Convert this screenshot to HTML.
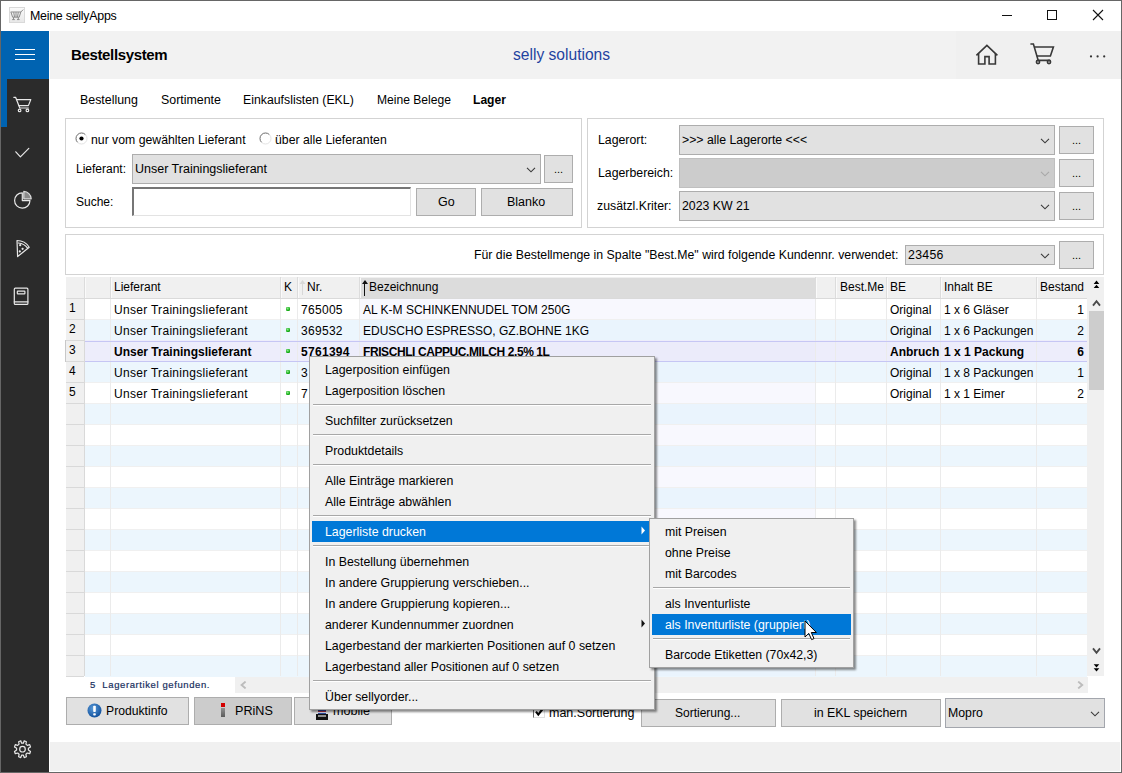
<!DOCTYPE html>
<html><head><meta charset="utf-8">
<style>
*{box-sizing:border-box;margin:0;padding:0}
html,body{width:1122px;height:773px;overflow:hidden;background:#fff}
body{position:relative;font-family:"Liberation Sans",sans-serif;font-size:12px;color:#000}
.a{position:absolute}
.t{position:absolute;white-space:pre;line-height:14px}
.gb{position:absolute;border:1px solid #d3d3d3;background:#fff}
.cb{position:absolute;background:#e1e1e1;border:1px solid #adadad}
.btn{position:absolute;background:#e1e1e1;border:1px solid #adadad;text-align:center}
.chev{position:absolute;width:7px;height:7px;border-right:1.3px solid #333;border-bottom:1.3px solid #333;transform:rotate(45deg)}
.sep{position:absolute;height:1px;background:#cfcfcf;border-bottom:1px solid #fff}
</style></head><body>

<!-- window border -->
<div class="a" style="left:0;top:0;width:1122px;height:773px;border:1px solid #666"></div>

<!-- title bar -->
<div class="a" style="left:9px;top:7px;width:16px;height:16px;border:1px solid #d9d9d9;background:linear-gradient(#fafafa,#e8e8e8)"></div>
<div class="t" style="left:30px;top:8.5px;font-size:12.4px;letter-spacing:-0.25px">Meine sellyApps</div>
<div class="a" style="left:1002px;top:15px;width:10px;height:1px;background:#111"></div>
<div class="a" style="left:1047px;top:10px;width:10px;height:10px;border:1px solid #111"></div>
<svg class="a" style="left:1092px;top:9px" width="12" height="12" viewBox="0 0 12 12"><path d="M1 1L11 11M11 1L1 11" stroke="#111" stroke-width="1.1"/></svg>

<!-- sidebar -->
<div class="a" style="left:1px;top:31px;width:48px;height:741px;background:#2b2b2b"></div>
<div class="a" style="left:1px;top:31px;width:48px;height:48px;background:#0063b1"></div>
<div class="a" style="left:1px;top:79px;width:6px;height:48px;background:#0063b1"></div>
<div class="a" style="left:15px;top:49px;width:20px;height:1px;background:#fff"></div>
<div class="a" style="left:15px;top:54px;width:20px;height:1px;background:#fff"></div>
<div class="a" style="left:15px;top:59px;width:20px;height:1px;background:#fff"></div>

<!-- header -->
<div class="a" style="left:50px;top:31px;width:1071px;height:48px;background:#f2f2f2"></div>
<div class="a" style="left:956px;top:31px;width:165px;height:48px;background:#f0f0f0"></div>
<div class="t" style="left:71px;top:47.5px;font-size:15px;letter-spacing:-0.35px;font-weight:bold">Bestellsystem</div>
<div class="t" style="left:513px;top:48px;font-size:15.6px;color:#1f42a0">selly solutions</div>

<!-- tabs -->
<div class="t" style="left:80px;top:93px;font-size:12.4px">Bestellung</div>
<div class="t" style="left:161px;top:93px;font-size:12.4px">Sortimente</div>
<div class="t" style="left:243px;top:93px;font-size:12.3px">Einkaufslisten (EKL)</div>
<div class="t" style="left:377px;top:93px;font-size:12.1px">Meine Belege</div>
<div class="t" style="left:473px;top:93px;font-size:12.1px;font-weight:bold">Lager</div>

<!-- left group box -->
<div class="gb" style="left:65px;top:118px;width:517px;height:110px"></div>
<div class="gb" style="left:587px;top:118px;width:517px;height:110px"></div>

<!-- kundennr box -->
<div class="gb" style="left:65px;top:234px;width:1039px;height:41px"></div>


<!-- left group contents -->
<svg class="a" style="left:75px;top:132px" width="13" height="13" viewBox="0 0 13 13"><path d="M10.4 2.6A5.5 5.5 0 0 0 2.6 10.4" stroke="#6a6a6a" stroke-width="1" fill="none"/><path d="M10.4 2.6A5.5 5.5 0 0 1 2.6 10.4" stroke="#e3e3e3" stroke-width="1" fill="none"/><circle cx="6.5" cy="6.5" r="2.1" fill="#000"/></svg>
<div class="t" style="left:91px;top:133px;font-size:12.25px">nur vom gewählten Lieferant</div>
<svg class="a" style="left:259px;top:132px" width="13" height="13" viewBox="0 0 13 13"><path d="M10.4 2.6A5.5 5.5 0 0 0 2.6 10.4" stroke="#6a6a6a" stroke-width="1" fill="none"/><path d="M10.4 2.6A5.5 5.5 0 0 1 2.6 10.4" stroke="#e3e3e3" stroke-width="1" fill="none"/></svg>
<div class="t" style="left:275px;top:133px;font-size:12.25px">über alle Lieferanten</div>

<div class="t" style="left:76px;top:162px;font-size:12px">Lieferant:</div>
<div class="cb" style="left:132px;top:154px;width:409px;height:30px"></div>
<div class="t" style="left:135px;top:162px;font-size:12.5px">Unser Trainingslieferant</div>
<svg class="a" style="left:526px;top:167px" width="10" height="6"><path d="M1 0.8L5 4.8L9 0.8" stroke="#3a3a3a" stroke-width="1.1" fill="none"/></svg>
<div class="btn" style="left:544px;top:155px;width:29px;height:28px"></div>
<div class="t" style="left:554px;top:162px;font-size:11px">...</div>

<div class="t" style="left:76px;top:195px;font-size:12px">Suche:</div>
<div class="a" style="left:132px;top:187px;width:279px;height:29px;background:#fff;border:1px solid #e3e3e3;border-top:2px solid #767676;border-left:2px solid #767676"></div>
<div class="btn" style="left:416px;top:188px;width:60px;height:28px"></div>
<div class="t" style="left:438px;top:195px;font-size:12.5px">Go</div>
<div class="btn" style="left:481px;top:188px;width:92px;height:28px"></div>
<div class="t" style="left:507px;top:195px;font-size:12.5px">Blanko</div>

<!-- right group contents -->
<div class="t" style="left:598px;top:133px;font-size:12.3px">Lagerort:</div>
<div class="cb" style="left:679px;top:125px;width:376px;height:30px"></div>
<div class="t" style="left:682px;top:133px;font-size:12.3px">&gt;&gt;&gt; alle Lagerorte &lt;&lt;&lt;</div>
<svg class="a" style="left:1040px;top:138px" width="10" height="6"><path d="M1 0.8L5 4.8L9 0.8" stroke="#3a3a3a" stroke-width="1.1" fill="none"/></svg>
<div class="btn" style="left:1059px;top:126px;width:35px;height:28px"></div>
<div class="t" style="left:1072px;top:133px;font-size:11px">...</div>

<div class="t" style="left:598px;top:166px;font-size:12.3px">Lagerbereich:</div>
<div class="cb" style="left:679px;top:158px;width:376px;height:30px;background:#cccccc;border-color:#bfbfbf"></div>
<svg class="a" style="left:1040px;top:171px" width="10" height="6"><path d="M1 0.8L5 4.8L9 0.8" stroke="#a8a8a8" stroke-width="1.1" fill="none"/></svg>
<div class="btn" style="left:1059px;top:159px;width:35px;height:28px"></div>
<div class="t" style="left:1072px;top:166px;font-size:11px">...</div>

<div class="t" style="left:597px;top:199px;font-size:12.3px">zusätzl.Kriter:</div>
<div class="cb" style="left:679px;top:191px;width:376px;height:30px"></div>
<div class="t" style="left:682px;top:199px;font-size:12.3px">2023 KW 21</div>
<svg class="a" style="left:1040px;top:204px" width="10" height="6"><path d="M1 0.8L5 4.8L9 0.8" stroke="#3a3a3a" stroke-width="1.1" fill="none"/></svg>
<div class="btn" style="left:1059px;top:192px;width:35px;height:28px"></div>
<div class="t" style="left:1072px;top:199px;font-size:11px">...</div>

<!-- kundennr row -->
<div class="t" style="left:474px;top:248px;font-size:12.3px">Für die Bestellmenge in Spalte "Best.Me" wird folgende Kundennr. verwendet:</div>
<div class="cb" style="left:905px;top:245px;width:150px;height:20px"></div>
<div class="t" style="left:908px;top:248px;font-size:12.3px;letter-spacing:0.3px">23456</div>
<svg class="a" style="left:1040px;top:253px" width="10" height="6"><path d="M1 0.8L5 4.8L9 0.8" stroke="#3a3a3a" stroke-width="1.1" fill="none"/></svg>
<div class="btn" style="left:1059px;top:241px;width:35px;height:28px"></div>
<div class="t" style="left:1072px;top:248px;font-size:11px">...</div>


<!-- sidebar icons -->
<svg class="a" style="left:0;top:0;overflow:visible" width="50" height="773">
<g fill="none" stroke="#e8e8e8" stroke-width="1.2" stroke-linecap="round" stroke-linejoin="round">
<path d="M13.8 97.3H15.6L19.8 108H28.4"/>
<path d="M16.6 99.6H30.8L28.4 105.6H18.8"/>
<circle cx="19.6" cy="110.4" r="1.3"/><circle cx="27.4" cy="110.4" r="1.3"/>
<path d="M15.8 151.8L20.4 156.8L28.8 148.4"/>
<path d="M22.3 192.8A7.7 7.7 0 1 0 30 200.6H22.3Z"/>
<path d="M23.8 191.4A7.8 7.8 0 0 1 31.2 198.8H23.8Z" fill="#8a8a8a" stroke="#dcdcdc"/>
<path d="M17 240.5Q25 240.5 29.2 247.2L17.6 256.6Z"/>
<path d="M18.3 243Q24.5 243.5 27.6 248.2"/>
<circle cx="20.2" cy="245.2" r="0.5" fill="#e8e8e8"/><circle cx="22.6" cy="248.8" r="0.5" fill="#e8e8e8"/><circle cx="19.8" cy="251.4" r="0.5" fill="#e8e8e8"/>
<rect x="14.3" y="288.2" width="13.6" height="16.2" rx="1"/>
<path d="M14.3 301.8H27.9"/>
<rect x="17.3" y="291.2" width="7.6" height="2.6" rx="0.6"/>
<path d="M20.8 740.8L21.6 743.2L23.4 743.2L24.2 740.8L26.4 741.7L25.9 744.1L27.3 745.4L29.7 744.7L30.5 746.9L28.4 748.3V750.1L30.5 751.5L29.7 753.7L27.3 753L25.9 754.3L26.4 756.7L24.2 757.6L23.4 755.2H21.6L20.8 757.6L18.6 756.7L19.1 754.3L17.7 753L15.3 753.7L14.5 751.5L16.6 750.1V748.3L14.5 746.9L15.3 744.7L17.7 745.4L19.1 744.1L18.6 741.7Z"/>
<circle cx="22.5" cy="749.2" r="2.8"/>
</g>
</svg>

<!-- header icons -->
<svg class="a" style="left:960px;top:31px;overflow:visible" width="160" height="48">
<g fill="none" stroke="#383838" stroke-width="1.6" stroke-linejoin="miter">
<path d="M16.4 24.4L26.9 14.4L37.4 24.4"/>
<path d="M18.6 22.4V33H24.9V25.6H29.1V33H35.4V22.4"/>
<path d="M70.4 13H73.4L78.2 29.4H90.2"/>
<path d="M74.4 16H93.4L90.4 25H76.8"/>
<circle cx="78" cy="31" r="1.6"/><circle cx="89" cy="31" r="1.6"/>
</g>
<circle cx="131" cy="25.4" r="1.1" fill="#333"/><circle cx="137.6" cy="25.4" r="1.1" fill="#333"/><circle cx="144.2" cy="25.4" r="1.1" fill="#333"/>
</svg>

<!-- title icon cart -->
<svg class="a" style="left:9px;top:7px" width="16" height="16" viewBox="0 0 16 16">
<g fill="none" stroke="#8a8a8a" stroke-width="1">
<path d="M1.6 5H11.8L14.2 2.6"/>
<path d="M2 5.2L3.6 10.2H10.2L11.8 5"/>
<path d="M4.7 5.2L5.5 10M7 5.2V10M9.3 5.2L8.5 10"/>
<path d="M4.5 10.2V12.4M9.3 10.2V12.4M3.2 12.6H5.8M8 12.6H10.6"/>
</g></svg>

<!-- GRID START -->
<div class="a" style="left:66px;top:277px;width:1021px;height:21px;background:#f0f0f0"></div>
<div class="a" style="left:361px;top:278px;width:454px;height:20px;background:#dcdcdc"></div>
<div class="a" style="left:84px;top:277px;width:1px;height:21px;background:#dcdcdc"></div>
<div class="a" style="left:85px;top:278px;width:1px;height:20px;background:#fafafa"></div>
<div class="a" style="left:110px;top:277px;width:1px;height:21px;background:#dcdcdc"></div>
<div class="a" style="left:111px;top:278px;width:1px;height:20px;background:#fafafa"></div>
<div class="a" style="left:280px;top:277px;width:1px;height:21px;background:#dcdcdc"></div>
<div class="a" style="left:281px;top:278px;width:1px;height:20px;background:#fafafa"></div>
<div class="a" style="left:297px;top:277px;width:1px;height:21px;background:#dcdcdc"></div>
<div class="a" style="left:298px;top:278px;width:1px;height:20px;background:#fafafa"></div>
<div class="a" style="left:359px;top:277px;width:1px;height:21px;background:#dcdcdc"></div>
<div class="a" style="left:360px;top:278px;width:1px;height:20px;background:#fafafa"></div>
<div class="a" style="left:815px;top:277px;width:1px;height:21px;background:#dcdcdc"></div>
<div class="a" style="left:816px;top:278px;width:1px;height:20px;background:#fafafa"></div>
<div class="a" style="left:835px;top:277px;width:1px;height:21px;background:#dcdcdc"></div>
<div class="a" style="left:836px;top:278px;width:1px;height:20px;background:#fafafa"></div>
<div class="a" style="left:886px;top:277px;width:1px;height:21px;background:#dcdcdc"></div>
<div class="a" style="left:887px;top:278px;width:1px;height:20px;background:#fafafa"></div>
<div class="a" style="left:940px;top:277px;width:1px;height:21px;background:#dcdcdc"></div>
<div class="a" style="left:941px;top:278px;width:1px;height:20px;background:#fafafa"></div>
<div class="a" style="left:1036px;top:277px;width:1px;height:21px;background:#dcdcdc"></div>
<div class="a" style="left:1037px;top:278px;width:1px;height:20px;background:#fafafa"></div>
<div class="a" style="left:66px;top:298px;width:1021px;height:1px;background:#dadada"></div>
<div class="t" style="left:114px;top:280px">Lieferant</div>
<div class="t" style="left:284px;top:280px">K</div>
<div class="t" style="left:307px;top:280px">Nr.</div>
<div class="t" style="left:369px;top:280px">Bezeichnung</div>
<div class="t" style="left:840px;top:280px">Best.Me</div>
<div class="t" style="left:890px;top:280px">BE</div>
<div class="t" style="left:944px;top:280px">Inhalt BE</div>
<div class="t" style="left:1040px;top:280px">Bestand</div>
<div class="a" style="left:302px;top:281px;width:1px;height:14px;background:#d8d8d8"></div>
<svg class="a" style="left:299px;top:280px" width="7" height="5"><path d="M3.5 0L0.5 4H6.5Z" fill="#d8d8d8"/></svg>
<div class="a" style="left:364px;top:281px;width:1px;height:15px;background:#111"></div>
<svg class="a" style="left:361.5px;top:280px" width="6" height="5"><path d="M3 0L0 4H6Z" fill="#111"/></svg>
<div class="a" style="left:66px;top:299px;width:18px;height:20px;background:#f0f0f0"></div>
<div class="a" style="left:66px;top:319px;width:18px;height:1px;background:#d9d9d9"></div>
<div class="a" style="left:85px;top:299px;width:1002px;height:21px;background:#ffffff"></div>
<div class="a" style="left:360px;top:299px;width:455px;height:20px;background:#f8f8fe"></div>
<div class="t" style="left:69px;top:301px">1</div>
<div class="a" style="left:66px;top:320px;width:18px;height:20px;background:#f0f0f0"></div>
<div class="a" style="left:66px;top:340px;width:18px;height:1px;background:#d9d9d9"></div>
<div class="a" style="left:85px;top:320px;width:1002px;height:21px;background:#ecf6fd"></div>
<div class="a" style="left:360px;top:320px;width:455px;height:20px;background:#eaf4fd"></div>
<div class="t" style="left:69px;top:322px">2</div>
<div class="a" style="left:66px;top:341px;width:18px;height:20px;background:#f0f0f0"></div>
<div class="a" style="left:66px;top:361px;width:18px;height:1px;background:#d9d9d9"></div>
<div class="a" style="left:85px;top:340px;width:1002px;height:21px;background:#ededfb"></div>
<div class="a" style="left:360px;top:341px;width:455px;height:20px;background:#ebebfa"></div>
<div class="t" style="left:69px;top:343px">3</div>
<div class="a" style="left:66px;top:362px;width:18px;height:20px;background:#f0f0f0"></div>
<div class="a" style="left:66px;top:382px;width:18px;height:1px;background:#d9d9d9"></div>
<div class="a" style="left:85px;top:362px;width:1002px;height:21px;background:#ecf6fd"></div>
<div class="a" style="left:360px;top:362px;width:455px;height:20px;background:#eaf4fd"></div>
<div class="t" style="left:69px;top:364px">4</div>
<div class="a" style="left:66px;top:383px;width:18px;height:20px;background:#f0f0f0"></div>
<div class="a" style="left:66px;top:403px;width:18px;height:1px;background:#d9d9d9"></div>
<div class="a" style="left:85px;top:383px;width:1002px;height:21px;background:#ffffff"></div>
<div class="a" style="left:360px;top:383px;width:455px;height:20px;background:#f8f8fe"></div>
<div class="t" style="left:69px;top:385px">5</div>
<div class="a" style="left:66px;top:404px;width:18px;height:20px;background:#f0f0f0"></div>
<div class="a" style="left:66px;top:424px;width:18px;height:1px;background:#d9d9d9"></div>
<div class="a" style="left:85px;top:404px;width:1002px;height:21px;background:#ecf6fd"></div>
<div class="a" style="left:360px;top:404px;width:455px;height:20px;background:#eaf4fd"></div>
<div class="a" style="left:66px;top:425px;width:18px;height:20px;background:#f0f0f0"></div>
<div class="a" style="left:66px;top:445px;width:18px;height:1px;background:#d9d9d9"></div>
<div class="a" style="left:85px;top:425px;width:1002px;height:21px;background:#ffffff"></div>
<div class="a" style="left:360px;top:425px;width:455px;height:20px;background:#f8f8fe"></div>
<div class="a" style="left:66px;top:446px;width:18px;height:20px;background:#f0f0f0"></div>
<div class="a" style="left:66px;top:466px;width:18px;height:1px;background:#d9d9d9"></div>
<div class="a" style="left:85px;top:446px;width:1002px;height:21px;background:#ecf6fd"></div>
<div class="a" style="left:360px;top:446px;width:455px;height:20px;background:#eaf4fd"></div>
<div class="a" style="left:66px;top:467px;width:18px;height:20px;background:#f0f0f0"></div>
<div class="a" style="left:66px;top:487px;width:18px;height:1px;background:#d9d9d9"></div>
<div class="a" style="left:85px;top:467px;width:1002px;height:21px;background:#ffffff"></div>
<div class="a" style="left:360px;top:467px;width:455px;height:20px;background:#f8f8fe"></div>
<div class="a" style="left:66px;top:488px;width:18px;height:20px;background:#f0f0f0"></div>
<div class="a" style="left:66px;top:508px;width:18px;height:1px;background:#d9d9d9"></div>
<div class="a" style="left:85px;top:488px;width:1002px;height:21px;background:#ecf6fd"></div>
<div class="a" style="left:360px;top:488px;width:455px;height:20px;background:#eaf4fd"></div>
<div class="a" style="left:66px;top:509px;width:18px;height:20px;background:#f0f0f0"></div>
<div class="a" style="left:66px;top:529px;width:18px;height:1px;background:#d9d9d9"></div>
<div class="a" style="left:85px;top:509px;width:1002px;height:21px;background:#ffffff"></div>
<div class="a" style="left:360px;top:509px;width:455px;height:20px;background:#f8f8fe"></div>
<div class="a" style="left:66px;top:530px;width:18px;height:20px;background:#f0f0f0"></div>
<div class="a" style="left:66px;top:550px;width:18px;height:1px;background:#d9d9d9"></div>
<div class="a" style="left:85px;top:530px;width:1002px;height:21px;background:#ecf6fd"></div>
<div class="a" style="left:360px;top:530px;width:455px;height:20px;background:#eaf4fd"></div>
<div class="a" style="left:66px;top:551px;width:18px;height:20px;background:#f0f0f0"></div>
<div class="a" style="left:66px;top:571px;width:18px;height:1px;background:#d9d9d9"></div>
<div class="a" style="left:85px;top:551px;width:1002px;height:21px;background:#ffffff"></div>
<div class="a" style="left:360px;top:551px;width:455px;height:20px;background:#f8f8fe"></div>
<div class="a" style="left:66px;top:572px;width:18px;height:20px;background:#f0f0f0"></div>
<div class="a" style="left:66px;top:592px;width:18px;height:1px;background:#d9d9d9"></div>
<div class="a" style="left:85px;top:572px;width:1002px;height:21px;background:#ecf6fd"></div>
<div class="a" style="left:360px;top:572px;width:455px;height:20px;background:#eaf4fd"></div>
<div class="a" style="left:66px;top:593px;width:18px;height:20px;background:#f0f0f0"></div>
<div class="a" style="left:66px;top:613px;width:18px;height:1px;background:#d9d9d9"></div>
<div class="a" style="left:85px;top:593px;width:1002px;height:21px;background:#ffffff"></div>
<div class="a" style="left:360px;top:593px;width:455px;height:20px;background:#f8f8fe"></div>
<div class="a" style="left:66px;top:614px;width:18px;height:20px;background:#f0f0f0"></div>
<div class="a" style="left:66px;top:634px;width:18px;height:1px;background:#d9d9d9"></div>
<div class="a" style="left:85px;top:614px;width:1002px;height:21px;background:#ecf6fd"></div>
<div class="a" style="left:360px;top:614px;width:455px;height:20px;background:#eaf4fd"></div>
<div class="a" style="left:66px;top:635px;width:18px;height:20px;background:#f0f0f0"></div>
<div class="a" style="left:66px;top:655px;width:18px;height:1px;background:#d9d9d9"></div>
<div class="a" style="left:85px;top:635px;width:1002px;height:21px;background:#ffffff"></div>
<div class="a" style="left:360px;top:635px;width:455px;height:20px;background:#f8f8fe"></div>
<div class="a" style="left:66px;top:656px;width:18px;height:20px;background:#f0f0f0"></div>
<div class="a" style="left:66px;top:676px;width:18px;height:1px;background:#d9d9d9"></div>
<div class="a" style="left:85px;top:656px;width:1002px;height:21px;background:#ecf6fd"></div>
<div class="a" style="left:360px;top:656px;width:455px;height:20px;background:#eaf4fd"></div>
<div class="a" style="left:85px;top:319px;width:1002px;height:1px;background:#f0f0f0"></div>
<div class="a" style="left:85px;top:382px;width:1002px;height:1px;background:#f0f0f0"></div>
<div class="a" style="left:85px;top:403px;width:1002px;height:1px;background:#f0f0f0"></div>
<div class="a" style="left:85px;top:424px;width:1002px;height:1px;background:#f0f0f0"></div>
<div class="a" style="left:85px;top:445px;width:1002px;height:1px;background:#f0f0f0"></div>
<div class="a" style="left:85px;top:466px;width:1002px;height:1px;background:#f0f0f0"></div>
<div class="a" style="left:85px;top:487px;width:1002px;height:1px;background:#f0f0f0"></div>
<div class="a" style="left:85px;top:508px;width:1002px;height:1px;background:#f0f0f0"></div>
<div class="a" style="left:85px;top:529px;width:1002px;height:1px;background:#f0f0f0"></div>
<div class="a" style="left:85px;top:550px;width:1002px;height:1px;background:#f0f0f0"></div>
<div class="a" style="left:85px;top:571px;width:1002px;height:1px;background:#f0f0f0"></div>
<div class="a" style="left:85px;top:592px;width:1002px;height:1px;background:#f0f0f0"></div>
<div class="a" style="left:85px;top:613px;width:1002px;height:1px;background:#f0f0f0"></div>
<div class="a" style="left:85px;top:634px;width:1002px;height:1px;background:#f0f0f0"></div>
<div class="a" style="left:85px;top:655px;width:1002px;height:1px;background:#f0f0f0"></div>
<div class="a" style="left:84px;top:299px;width:1px;height:377px;background:#d9d9d9"></div>
<div class="a" style="left:110px;top:299px;width:1px;height:377px;background:#ebebeb"></div>
<div class="a" style="left:280px;top:299px;width:1px;height:377px;background:#ebebeb"></div>
<div class="a" style="left:297px;top:299px;width:1px;height:377px;background:#ebebeb"></div>
<div class="a" style="left:359px;top:299px;width:1px;height:377px;background:#ebebeb"></div>
<div class="a" style="left:815px;top:299px;width:1px;height:377px;background:#ebebeb"></div>
<div class="a" style="left:835px;top:299px;width:1px;height:377px;background:#ebebeb"></div>
<div class="a" style="left:886px;top:299px;width:1px;height:377px;background:#ebebeb"></div>
<div class="a" style="left:940px;top:299px;width:1px;height:377px;background:#ebebeb"></div>
<div class="a" style="left:1036px;top:299px;width:1px;height:377px;background:#ebebeb"></div>
<div class="a" style="left:85px;top:341px;width:1002px;height:1px;background:#c6c6f4"></div>
<div class="a" style="left:85px;top:361px;width:1002px;height:1px;background:#c6c6f4"></div>
<div class="a" style="left:65px;top:340px;width:1px;height:22px;background:#c8c8c8"></div>
<div class="t" style="left:114px;top:303px;letter-spacing:0.3px">Unser Trainingslieferant</div>
<div class="a" style="left:286px;top:307px;width:4px;height:4px;background:radial-gradient(circle at 40% 35%,#8fe88f,#18b018 60%,#0a800a);border-radius:1.2px"></div>
<div class="t" style="left:301px;top:303px;letter-spacing:0.3px">765005</div>
<div class="t" style="left:363px;top:303px">AL K-M SCHINKENNUDEL TOM 250G</div>
<div class="t" style="left:890px;top:303px">Original</div>
<div class="t" style="left:944px;top:303px">1 x 6 Gläser</div>
<div class="t" style="left:1000px;top:303px;width:84px;text-align:right">1</div>
<div class="t" style="left:114px;top:324px;letter-spacing:0.3px">Unser Trainingslieferant</div>
<div class="a" style="left:286px;top:328px;width:4px;height:4px;background:radial-gradient(circle at 40% 35%,#8fe88f,#18b018 60%,#0a800a);border-radius:1.2px"></div>
<div class="t" style="left:301px;top:324px;letter-spacing:0.3px">369532</div>
<div class="t" style="left:363px;top:324px">EDUSCHO ESPRESSO, GZ.BOHNE 1KG</div>
<div class="t" style="left:890px;top:324px">Original</div>
<div class="t" style="left:944px;top:324px">1 x 6 Packungen</div>
<div class="t" style="left:1000px;top:324px;width:84px;text-align:right">2</div>
<div class="t" style="left:114px;top:345px;font-weight:bold">Unser Trainingslieferant</div>
<div class="a" style="left:286px;top:349px;width:4px;height:4px;background:radial-gradient(circle at 40% 35%,#8fe88f,#18b018 60%,#0a800a);border-radius:1.2px"></div>
<div class="t" style="left:301px;top:345px;font-weight:bold;letter-spacing:0.3px">5761394</div>
<div class="t" style="left:363px;top:345px;font-weight:bold;letter-spacing:-0.42px">FRISCHLI CAPPUC.MILCH 2.5% 1L</div>
<div class="t" style="left:890px;top:345px;font-weight:bold">Anbruch</div>
<div class="t" style="left:944px;top:345px;font-weight:bold">1 x 1 Packung</div>
<div class="t" style="left:1000px;top:345px;width:84px;text-align:right;font-weight:bold">6</div>
<div class="t" style="left:114px;top:366px;letter-spacing:0.3px">Unser Trainingslieferant</div>
<div class="a" style="left:286px;top:370px;width:4px;height:4px;background:radial-gradient(circle at 40% 35%,#8fe88f,#18b018 60%,#0a800a);border-radius:1.2px"></div>
<div class="t" style="left:301px;top:366px;letter-spacing:0.3px">3</div>
<div class="t" style="left:890px;top:366px">Original</div>
<div class="t" style="left:944px;top:366px">1 x 8 Packungen</div>
<div class="t" style="left:1000px;top:366px;width:84px;text-align:right">1</div>
<div class="t" style="left:114px;top:387px;letter-spacing:0.3px">Unser Trainingslieferant</div>
<div class="a" style="left:286px;top:391px;width:4px;height:4px;background:radial-gradient(circle at 40% 35%,#8fe88f,#18b018 60%,#0a800a);border-radius:1.2px"></div>
<div class="t" style="left:301px;top:387px;letter-spacing:0.3px">7</div>
<div class="t" style="left:890px;top:387px">Original</div>
<div class="t" style="left:944px;top:387px">1 x 1 Eimer</div>
<div class="t" style="left:1000px;top:387px;width:84px;text-align:right">2</div>
<div class="a" style="left:1087px;top:277px;width:17px;height:399px;background:#f0f0f0"></div>
<div class="a" style="left:1089px;top:311px;width:15px;height:79px;background:#cdcdcd"></div>
<svg class="a" style="left:1093px;top:280px" width="7" height="10"><path d="M3.5 0.6L6.3 3.9H0.7Z M3.5 4.7L6.3 8H0.7Z" fill="#000"/></svg>
<svg class="a" style="left:1092px;top:299px" width="9" height="8"><path d="M1 6.6L4.5 2.2L8 6.6" stroke="#4a4a4a" stroke-width="1.9" fill="none"/></svg>
<svg class="a" style="left:1092px;top:647px" width="9" height="8"><path d="M1 1.4L4.5 5.8L8 1.4" stroke="#4a4a4a" stroke-width="1.9" fill="none"/></svg>
<svg class="a" style="left:1093px;top:663px" width="7" height="10"><path d="M3.5 4.6L6.3 1.2H0.7Z M3.5 8.6L6.3 5.2H0.7Z" fill="#000"/></svg>
<div class="a" style="left:235px;top:677px;width:853px;height:16px;background:#f0f0f0"></div>
<svg class="a" style="left:240px;top:681px" width="7" height="8"><path d="M5.6 0.6L1.6 4L5.6 7.4" stroke="#bcbcbc" stroke-width="1.9" fill="none"/></svg>
<svg class="a" style="left:1077px;top:681px" width="7" height="8"><path d="M1.2 0.6L5.2 4L1.2 7.4" stroke="#bcbcbc" stroke-width="1.9" fill="none"/></svg>
<div class="t" style="left:90px;top:678px;font-size:9.5px;letter-spacing:0.6px;color:#18305e;-webkit-text-stroke:0.2px #18305e">5  Lagerartikel gefunden.</div>
<!-- GRID END -->

<!-- bottom buttons -->
<div class="btn" style="left:66px;top:697px;width:123px;height:28px"></div>
<svg class="a" style="left:87px;top:703px" width="15" height="15" viewBox="0 0 15 15"><defs><radialGradient id="ig" cx="0.4" cy="0.35" r="0.7"><stop offset="0" stop-color="#5a9ad8"/><stop offset="1" stop-color="#0d4d9a"/></radialGradient></defs><circle cx="7.5" cy="7.5" r="7" fill="url(#ig)"/><rect x="6.2" y="2.8" width="2.6" height="6.2" rx="0.8" fill="#fff"/><rect x="6.2" y="10.2" width="2.6" height="2.4" rx="0.8" fill="#fff"/></svg>
<div class="t" style="left:106px;top:704px;font-size:12.2px">Produktinfo</div>
<div class="btn" style="left:194px;top:697px;width:98px;height:28px;background:#cccccc"></div>
<div class="a" style="left:221px;top:703px;width:4px;height:4px;background:#d40000"></div>
<div class="a" style="left:221px;top:708px;width:4px;height:9px;background:linear-gradient(#909090,#5a5a5a)"></div>
<div class="t" style="left:235px;top:704px;font-size:12.6px">PRiNS</div>
<div class="btn" style="left:294px;top:697px;width:98px;height:28px"></div>
<div class="a" style="left:316px;top:714px;width:12px;height:6px;background:#111"></div>
<div class="a" style="left:318px;top:709px;width:8px;height:5px;background:linear-gradient(#2a4a9a 0,#2a4a9a 30%,#b03040 30%,#b03040 50%,#d8d8f0 50%,#d8d8f0 70%,#2a4a9a 70%)"></div><div class="a" style="left:318px;top:715px;width:8px;height:2px;background:#909090"></div>
<div class="t" style="left:333px;top:704px;font-size:12.6px">mobile</div>

<div class="a" style="left:533px;top:706px;width:12px;height:12px;background:#fff;border:1px solid #e0e0e0;border-left-color:#6a6a6a;border-top-color:#6a6a6a"></div>
<svg class="a" style="left:534px;top:707px" width="10" height="10"><path d="M2 4.6L4.3 7.6L8.6 2" stroke="#000" stroke-width="2.1" fill="none"/></svg>
<div class="t" style="left:549px;top:706px;font-size:12.5px">man.Sortierung</div>
<div class="btn" style="left:641px;top:699px;width:135px;height:28px"></div>
<div class="t" style="left:675px;top:706px;font-size:12px">Sortierung...</div>
<div class="btn" style="left:781px;top:699px;width:160px;height:28px"></div>
<div class="t" style="left:814px;top:706px;font-size:12.4px">in EKL speichern</div>
<div class="cb" style="left:945px;top:698px;width:160px;height:30px;border-color:#a3a6ad"></div>
<div class="t" style="left:948px;top:706px;font-size:12.3px">Mopro</div>
<svg class="a" style="left:1090px;top:711px" width="10" height="6"><path d="M1 0.8L5 4.8L9 0.8" stroke="#3a3a3a" stroke-width="1.1" fill="none"/></svg>

<!-- bottom status bar -->
<div class="a" style="left:50px;top:742px;width:1070px;height:29px;background:#f0f0f0"></div>

<!-- MENU START -->
<div class="a" style="left:309px;top:356px;width:346px;height:354px;background:#f0f0f0;border:1px solid #a0a0a0;box-shadow:2px 2px 2px rgba(0,0,0,0.45)"></div>
<div class="t" style="left:325px;top:363px;font-size:12.35px;color:#000">Lagerposition einfügen</div>
<div class="t" style="left:325px;top:384px;font-size:12.35px;color:#000">Lagerposition löschen</div>
<div class="a" style="left:313px;top:404px;width:338px;height:1px;background:#a8a8a8"></div>
<div class="a" style="left:313px;top:405px;width:338px;height:1px;background:#fff"></div>
<div class="t" style="left:325px;top:414px;font-size:12.35px;color:#000">Suchfilter zurücksetzen</div>
<div class="a" style="left:313px;top:434px;width:338px;height:1px;background:#a8a8a8"></div>
<div class="a" style="left:313px;top:435px;width:338px;height:1px;background:#fff"></div>
<div class="t" style="left:325px;top:444px;font-size:12.35px;color:#000">Produktdetails</div>
<div class="a" style="left:313px;top:464px;width:338px;height:1px;background:#a8a8a8"></div>
<div class="a" style="left:313px;top:465px;width:338px;height:1px;background:#fff"></div>
<div class="t" style="left:325px;top:474px;font-size:12.35px;color:#000">Alle Einträge markieren</div>
<div class="t" style="left:325px;top:495px;font-size:12.35px;color:#000">Alle Einträge abwählen</div>
<div class="a" style="left:313px;top:515px;width:338px;height:1px;background:#a8a8a8"></div>
<div class="a" style="left:313px;top:516px;width:338px;height:1px;background:#fff"></div>
<div class="a" style="left:312px;top:521px;width:337px;height:21px;background:#0078d7"></div>
<svg class="a" style="left:640px;top:526px" width="6" height="9"><path d="M1.5 0.5L5 4.5L1.5 8.5Z" fill="#fff"/></svg>
<div class="t" style="left:325px;top:525px;font-size:12.35px;color:#fff">Lagerliste drucken</div>
<div class="a" style="left:313px;top:545px;width:338px;height:1px;background:#a8a8a8"></div>
<div class="a" style="left:313px;top:546px;width:338px;height:1px;background:#fff"></div>
<div class="t" style="left:325px;top:555px;font-size:12.35px;color:#000">In Bestellung übernehmen</div>
<div class="t" style="left:325px;top:576px;font-size:12.35px;color:#000">In andere Gruppierung verschieben...</div>
<div class="t" style="left:325px;top:597px;font-size:12.35px;color:#000">In andere Gruppierung kopieren...</div>
<svg class="a" style="left:640px;top:619px" width="6" height="9"><path d="M1.5 0.5L5 4.5L1.5 8.5Z" fill="#111"/></svg>
<div class="t" style="left:325px;top:618px;font-size:12.35px;color:#000">anderer Kundennummer zuordnen</div>
<div class="t" style="left:325px;top:639px;font-size:12.35px;color:#000">Lagerbestand der markierten Positionen auf 0 setzen</div>
<div class="t" style="left:325px;top:660px;font-size:12.35px;color:#000">Lagerbestand aller Positionen auf 0 setzen</div>
<div class="a" style="left:313px;top:680px;width:338px;height:1px;background:#a8a8a8"></div>
<div class="a" style="left:313px;top:681px;width:338px;height:1px;background:#fff"></div>
<div class="t" style="left:325px;top:690px;font-size:12.35px;color:#000">Über sellyorder...</div>
<div class="a" style="left:649px;top:518px;width:205px;height:150px;background:#f0f0f0;border:1px solid #a0a0a0;box-shadow:2px 2px 2px rgba(0,0,0,0.45)"></div>
<div class="t" style="left:665px;top:525px;font-size:12.3px;color:#000">mit Preisen</div>
<div class="t" style="left:665px;top:546px;font-size:12.3px;color:#000">ohne Preise</div>
<div class="t" style="left:665px;top:567px;font-size:12.3px;color:#000">mit Barcodes</div>
<div class="a" style="left:653px;top:587px;width:197px;height:1px;background:#a8a8a8"></div>
<div class="a" style="left:653px;top:588px;width:197px;height:1px;background:#fff"></div>
<div class="t" style="left:665px;top:597px;font-size:12.3px;color:#000">als Inventurliste</div>
<div class="a" style="left:652px;top:614px;width:199px;height:21px;background:#0078d7"></div>
<div class="t" style="left:665px;top:618px;font-size:12.3px;color:#fff">als Inventurliste (gruppiert)</div>
<div class="a" style="left:653px;top:638px;width:197px;height:1px;background:#a8a8a8"></div>
<div class="a" style="left:653px;top:639px;width:197px;height:1px;background:#fff"></div>
<div class="t" style="left:665px;top:648px;font-size:12.3px;color:#000">Barcode Etiketten (70x42,3)</div>
<svg class="a" style="left:804px;top:620px" width="14" height="21" viewBox="0 0 14 21"><path d="M1 1V17L4.8 13.4L7.6 19.6L10 18.6L7.3 12.5H12.4Z" fill="#fff" stroke="#000" stroke-width="1"/></svg>
<!-- MENU END -->
</body></html>
